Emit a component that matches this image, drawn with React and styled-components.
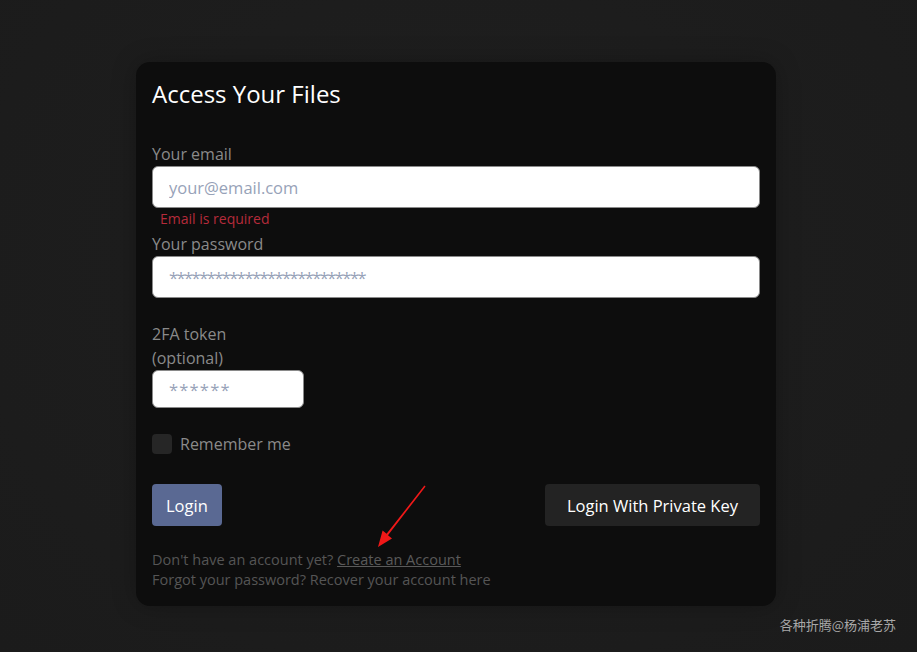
import React from 'react';
import styled, { createGlobalStyle } from 'styled-components';

const GlobalStyle = createGlobalStyle`
  html, body {
    margin: 0;
    padding: 0;
    height: 100%;
    background: #1d1d1d;
  }
  body {
    font-family: "Open Sans", "Noto Sans", sans-serif;
  }
  #root {
    min-height: 100%;
  }
`;

const Page = styled.div`
  position: relative;
  min-height: 652px;
  box-sizing: border-box;
  padding-top: 62px;
  display: flex;
  justify-content: center;
  align-items: flex-start;
  background: radial-gradient(ellipse at 50% 40%, #1f1f1f 0%, #1b1b1b 100%);
`;

const Card = styled.div`
  position: relative;
  width: 640px;
  box-sizing: border-box;
  margin-right: 5px;
  padding: 16px;
  background: #0d0d0d;
  border-radius: 14px;
  box-shadow: 0 0 24px rgba(0, 0, 0, 0.25);
  display: flex;
  flex-direction: column;
`;

const Title = styled.h1`
  margin: 0 0 33px;
  font-size: 24px;
  line-height: 31px;
  font-weight: 400;
  color: #fff;
`;

const Field = styled.div`
  display: flex;
  flex-direction: column;
  width: ${p => p.$width || '100%'};
`;

const Label = styled.label`
  max-width: ${p => p.$narrow ? '100px' : 'none'};
  font-size: 16px;
  line-height: 24px;
  color: #8a8a8a;
`;

const Input = styled.input`
  box-sizing: border-box;
  width: 100%;
  height: ${p => p.$height || '42px'};
  padding: 0 16px;
  border: 1px solid #8a8a8a;
  border-radius: 6px;
  background: #fff;
  font-family: inherit;
  font-size: 16.5px;
  color: #222;
  outline: none;
  &::placeholder {
    color: #97a2b8;
    letter-spacing: ${p => p.$spacing || '0'};
  }
`;

const Error = styled.div`
  padding-left: 8px;
  font-size: 14px;
  line-height: 22px;
  color: #b52b3b;
  min-height: 24px;
`;

const Remember = styled.label`
  display: flex;
  align-items: center;
  gap: 8px;
  margin-top: 1px;
  font-size: 16px;
  color: #8a8a8a;
`;

const Box = styled.span`
  width: 20px;
  height: 20px;
  border-radius: 4px;
  background: #262626;
`;

const Actions = styled.div`
  display: flex;
  justify-content: space-between;
  align-items: center;
  margin-top: 29px;
`;

const Button = styled.button`
  height: 42px;
  padding: 0 ${p => p.$pad || '14px'};
  border: none;
  border-radius: 4px;
  background: ${p => p.$primary ? '#5a6993' : '#232323'};
  color: #fff;
  font-family: inherit;
  font-size: 16.5px;
`;

const Footer = styled.div`
  margin-top: 24px;
  font-size: 14.5px;
  line-height: 20px;
  color: #555;
`;

const Link = styled.a`
  color: #5a5a5a;
  text-decoration: underline;
`;

const Arrow = styled.svg`
  position: absolute;
  left: 236px;
  top: 420px;
  pointer-events: none;
`;

const Watermark = styled.div`
  position: absolute;
  right: 21px;
  top: 615px;
  font-family: "Noto Sans CJK SC", sans-serif;
  font-size: 13px;
  line-height: 20px;
  color: #a8a8a8;
`;

export default function App() {
  return (
    <>
      <GlobalStyle />
      <Page>
        <Card>
          <Title>Access Your Files</Title>
          <Field>
            <Label>Your email</Label>
            <Input placeholder="your@email.com" />
            <Error>Email is required</Error>
          </Field>
          <Field>
            <Label>Your password</Label>
            <Input $spacing="-1.55px" placeholder="**************************" />
            <Error />
          </Field>
          <Field $width="152px">
            <Label $narrow>2FA token (optional)</Label>
            <Input $height="38px" $spacing="1.2px" placeholder="******" />
            <Error />
          </Field>
          <Remember>
            <Box />
            Remember me
          </Remember>
          <Actions>
            <Button $primary>Login</Button>
            <Button $pad="22px">Login With Private Key</Button>
          </Actions>
          <Footer>
            Don't have an account yet? <Link>Create an Account</Link>
            <br />
            Forgot your password? Recover your account here
          </Footer>
          <Arrow width="60" height="70" viewBox="0 0 60 70">
            <polygon
              points="53.6,4.4 52.4,3.6 14.6,51.8 10.6,48.4 6,65 20,56.6 16,53.2"
              fill="#f01818"
            />
          </Arrow>
        </Card>
        <Watermark>各种折腾@杨浦老苏</Watermark>
      </Page>
    </>
  );
}
